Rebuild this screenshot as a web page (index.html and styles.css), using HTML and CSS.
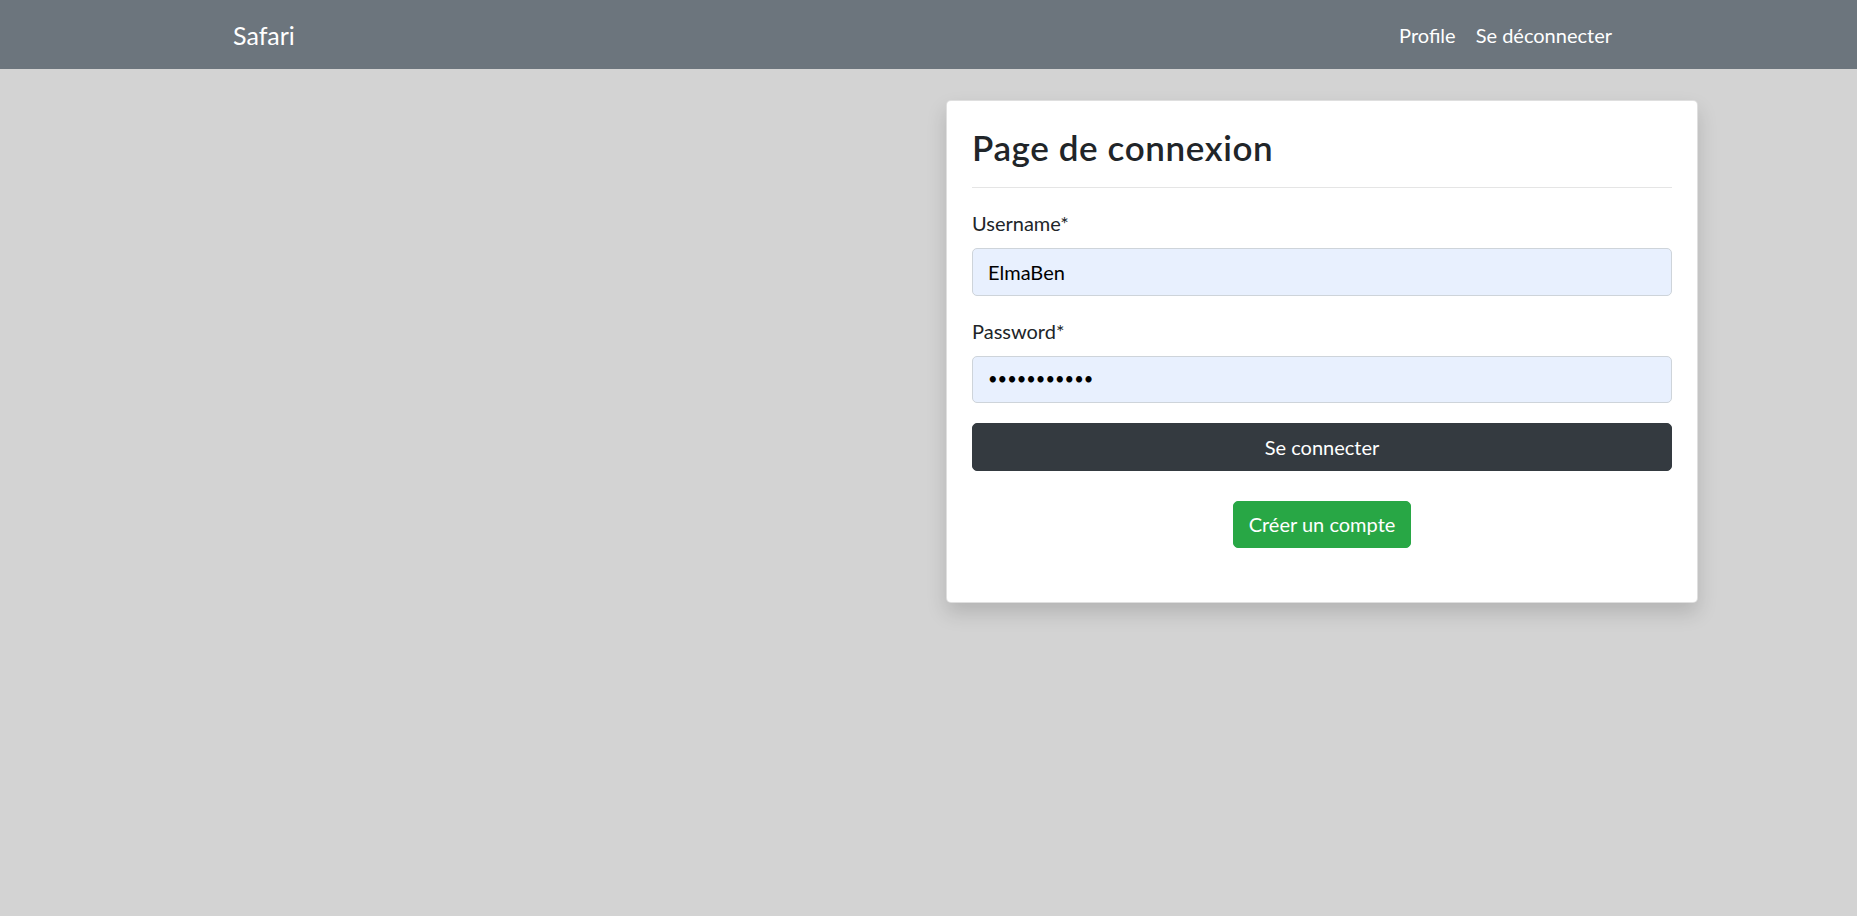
FILE: index.html
```html
<!DOCTYPE html>
<html lang="fr">
<head>
<meta charset="utf-8">
<title>Safari</title>
<link rel="stylesheet" href="styles.css">
</head>
<body>
<nav class="navbar">
  <a class="brand" href="#">Safari</a>
  <div class="nav-links">
    <a class="nav-link" href="#">Profile</a>
    <a class="nav-link" href="#">Se déconnecter</a>
  </div>
</nav>
<main class="main">
  <section class="card">
    <h2 class="card-title">Page de connexion</h2>
    <hr class="divider">
    <form class="form">
      <div class="form-group">
        <label class="label" for="username">Username*</label>
        <input class="input" id="username" type="text" value="ElmaBen">
      </div>
      <div class="form-group">
        <label class="label" for="password">Password*</label>
        <input class="input input-password" id="password" type="password" value="xxxxxxxxxxx">
      </div>
      <button class="btn btn-dark" type="button">Se connecter</button>
      <div class="signup-row">
        <button class="btn btn-success" type="button">Créer un compte</button>
      </div>
    </form>
  </section>
</main>
</body>
</html>
```

FILE: styles.css
```css
* {
  box-sizing: border-box;
}

html, body {
  margin: 0;
  padding: 0;
}

body {
  background: #d3d3d3;
  font-family: Lato, "Liberation Sans", sans-serif;
  color: #212529;
  min-height: 916px;
}

.navbar {
  height: 69px;
  background: #6c757d;
  display: flex;
  align-items: center;
  justify-content: space-between;
  padding: 0 235px 0 233px;
}

.brand {
  color: #fff;
  text-decoration: none;
  font-size: 25px;
  line-height: 30px;
}

.nav-links {
  display: flex;
}

.nav-link {
  color: #fff;
  text-decoration: none;
  font-size: 20px;
  line-height: 30px;
  padding: 0 10px;
}

.main {
  padding: 31px 0 0 946px;
}

.card {
  width: 752px;
  background: #fff;
  border: 1px solid rgba(0, 0, 0, 0.125);
  border-radius: 5px;
  box-shadow: 0 10px 20px rgba(0, 0, 0, 0.15);
  padding: 25px 25px 54px;
}

.card-title {
  margin: 0;
  font-size: 35px;
  line-height: 42px;
  font-weight: 600;
  letter-spacing: 0.6px;
}

.divider {
  margin: 19px 0 20px;
  border: 0;
  border-top: 1px solid rgba(0, 0, 0, 0.1);
}

.form {
  display: flex;
  flex-direction: column;
}

.form-group {
  display: flex;
  flex-direction: column;
  margin-bottom: 20px;
}

.label {
  font-size: 20px;
  line-height: 30px;
  margin-bottom: 10px;
}

.input {
  height: 47.5px;
  padding: 7.5px 15px;
  font-family: Lato, "Liberation Sans", sans-serif;
  font-size: 20px;
  line-height: 30px;
  color: #000;
  background: #e8f0fe;
  border: 1px solid #ced4da;
  border-radius: 5px;
  outline: none;
}

.input-password {
  font-size: 16.5px;
}

.btn {
  font-family: Lato, "Liberation Sans", sans-serif;
  font-size: 20px;
  line-height: 30px;
  padding: 7.5px 15px;
  border: 1px solid transparent;
  border-radius: 5px;
  color: #fff;
  cursor: pointer;
}

.btn-dark {
  height: 47.5px;
  width: 100%;
  background: #343a40;
  border-color: #343a40;
}

.signup-row {
  display: flex;
  justify-content: center;
  margin-top: 30px;
}

.btn-success {
  background: #28a745;
  border-color: #28a745;
}
```
